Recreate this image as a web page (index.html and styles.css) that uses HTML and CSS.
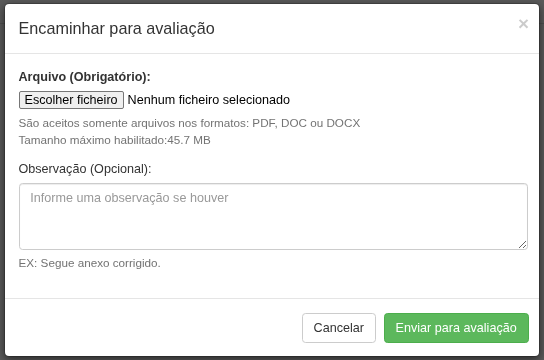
FILE: index.html
```html
<!DOCTYPE html>
<html lang="pt">
  <head>
    <meta charset="UTF-8" />
    <meta name="viewport" content="width=device-width, initial-scale=1.0" />
    <title>Encaminhar para avaliação</title>

    <link rel="stylesheet" href="styles.css">
  </head>

  <body>
    <div class="page">
      <div class="topbar"></div>
    </div>

    <div class="backdrop"></div>

    <div class="modal">
      <div class="modal-header">
        <span class="close">&times;</span>
        <h4 class="modal-title">Encaminhar para avaliação</h4>
      </div>

      <div class="modal-body">
        <div class="form-group">
          <label class="label-strong">Arquivo (Obrigatório):</label>
          <div class="file-input">
            <span class="file-btn">Escolher ficheiro</span>
            <span class="file-name">Nenhum ficheiro selecionado</span>
          </div>
          <p class="help-block">
            São aceitos somente arquivos nos formatos: PDF, DOC ou DOCX<br />
            Tamanho máximo habilitado:45.7 MB
          </p>
        </div>

        <div class="form-group">
          <label>Observação (Opcional):</label>
          <textarea class="form-control" rows="3" placeholder="Informe uma observação se houver"></textarea>
          <p class="help-block">EX: Segue anexo corrigido.</p>
        </div>
      </div>

      <div class="modal-footer">
        <button class="btn btn-default">Cancelar</button>
        <button class="btn btn-success">Enviar para avaliação</button>
      </div>
    </div>
  </body>
</html>
```

FILE: styles.css
```css
* {
  margin: 0;
  padding: 0;
  box-sizing: border-box;
  font-family: "Liberation Sans", Arial, sans-serif;
}
body {
  width: 544px;
  height: 360px;
  overflow: hidden;
  background: #fff;
  color: #333;
  font-size: 12.6px;
  line-height: 18px;
}

.page {
  height: 360px;
}
.topbar {
  height: 24px;
  border-bottom: 1px solid #ddd;
}

.backdrop {
  position: fixed;
  inset: 0;
  background: rgba(0, 0, 0, 0.65);
}

.modal {
  position: fixed;
  top: 3px;
  left: 4px;
  width: 536px;
  background: #fff;
  border: 1px solid rgba(0, 0, 0, 0.2);
  border-radius: 5px;
  box-shadow: 0 3px 9px rgba(0, 0, 0, 0.5);
  background-clip: padding-box;
}

.modal-header {
  padding: 13px 10px 13px 13.5px;
  border-bottom: 1px solid #e5e5e5;
}
.modal-title {
  font-size: 16.2px;
  font-weight: normal;
  line-height: 23px;
}
.close {
  float: right;
  margin-top: -2px;
  font-size: 18.9px;
  font-weight: bold;
  line-height: 1;
  color: #000;
  opacity: 0.2;
  cursor: pointer;
}

.modal-body {
  padding: 13.5px 11px 13.5px 13.5px;
}
.form-group {
  margin-bottom: 12.5px;
}
.form-group:last-child {
  margin-bottom: 13.5px;
}
label {
  display: block;
  margin-bottom: 4.5px;
}
.label-strong {
  font-weight: bold;
}
.form-group:last-child label {
  margin-bottom: 5px;
}

.file-input {
  display: flex;
  align-items: center;
  gap: 4px;
  height: 19px;
}
.file-btn {
  padding: 0 5px;
  height: 18px;
  line-height: 16px;
  background: #efefef;
  border: 1px solid #767676;
  border-radius: 2px;
  color: #000;
}
.file-name {
  color: #000;
}

.help-block {
  margin-top: 4.5px;
  font-size: 11.7px;
  line-height: 17px;
  color: #737373;
}

.form-control {
  display: block;
  width: 100%;
  height: 66.5px;
  padding: 5.4px 10.8px;
  font-size: 12.6px;
  line-height: 18px;
  color: #555;
  border: 1px solid #ccc;
  border-radius: 3.6px;
  box-shadow: inset 0 1px 1px rgba(0, 0, 0, 0.075);
  resize: vertical;
}
.form-control::placeholder {
  color: #999;
}

.modal-footer {
  display: flex;
  justify-content: flex-end;
  gap: 8px;
  padding: 13.5px 10.5px 13px 13.5px;
  border-top: 1px solid #e5e5e5;
}
.btn {
  padding: 5.4px 10.8px;
  font-size: 12.6px;
  line-height: 18px;
  border: 1px solid transparent;
  border-radius: 3.6px;
  cursor: pointer;
}
.btn-default {
  background: #fff;
  border-color: #ccc;
  color: #333;
}
.btn-success {
  background: #5cb85c;
  border-color: #4cae4c;
  color: #fff;
}
```
